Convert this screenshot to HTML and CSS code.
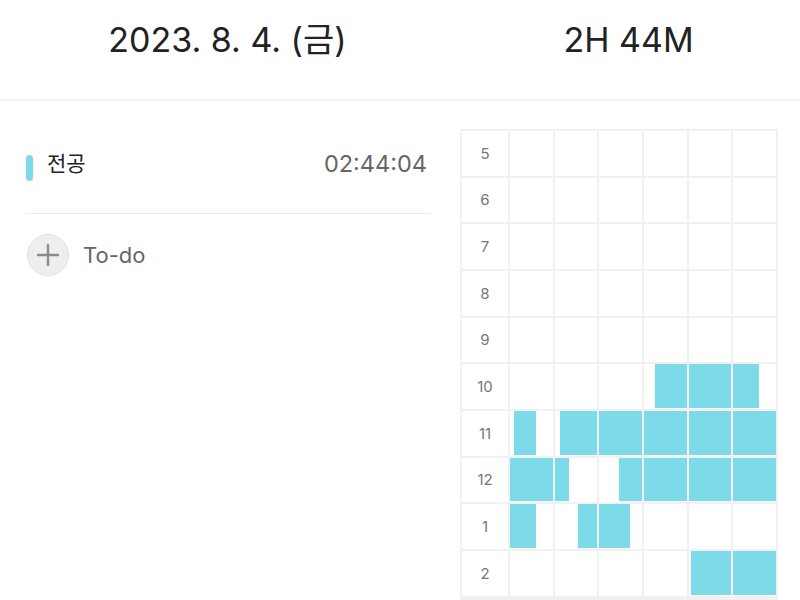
FILE: index.html
```html
<!DOCTYPE html>
<html lang="ko">
<head>
    <meta charset="UTF-8">
    <meta name="viewport" content="width=device-width, initial-scale=1.0">
    <title>타임테이블</title>
    <link rel="stylesheet" href="styles.css">
</head>
<body>
    <header class="day-header">
        <div class="day-date">2023. 8. 4. (금)</div>
        <div class="day-total">2H 44M</div>
    </header>

    <main class="day-body">
        <section class="task-panel">
            <div class="task-row">
                <span class="task-color"></span>
                <span class="task-name">전공</span>
                <span class="task-time">02:44:04</span>
            </div>

            <div class="todo-row">
                <span class="todo-add">
                    <svg width="22" height="22" viewBox="0 0 22 22">
                        <path d="M11 1v20M1 11h20" stroke="#8c8c8c" stroke-width="2.4" stroke-linecap="round" fill="none"/>
                    </svg>
                </span>
                <span class="todo-label">To-do</span>
            </div>
        </section>

        <section class="timetable" id="timetable"></section>
    </main>

    <script>
        // 시간 라벨 (오전 5시부터 오후 2시까지)
        const hours = [5, 6, 7, 8, 9, 10, 11, 12, 1, 2];

        // 공부 기록: [행 인덱스, 칸(10분 단위), 시작 분, 끝 분]
        const records = [
            [5, 3, 2.5, 10], [5, 4, 0, 10], [5, 5, 0, 6],
            [6, 0, 1, 6], [6, 1, 1.2, 10], [6, 2, 0, 10], [6, 3, 0, 10], [6, 4, 0, 10], [6, 5, 0, 10],
            [7, 0, 0, 10], [7, 1, 0, 3.3], [7, 2, 4.5, 10], [7, 3, 0, 10], [7, 4, 0, 10], [7, 5, 0, 10],
            [8, 0, 0, 6.2], [8, 1, 5.4, 10], [8, 2, 0, 7.3],
            [9, 4, 0.5, 10], [9, 5, 0, 10]
        ];

        const table = document.getElementById('timetable');

        hours.forEach(function (hour, row) {
            const label = document.createElement('div');
            label.className = 'hour-label';
            label.textContent = hour;
            table.appendChild(label);

            for (let col = 0; col < 6; col++) {
                const cell = document.createElement('div');
                cell.className = 'slot';

                records
                    .filter(r => r[0] === row && r[1] === col)
                    .forEach(function (r) {
                        const block = document.createElement('div');
                        block.className = 'slot-fill';
                        block.style.left = (r[2] * 10) + '%';
                        block.style.width = ((r[3] - r[2]) * 10) + '%';
                        cell.appendChild(block);
                    });

                table.appendChild(cell);
            }
        });
    </script>
</body>
</html>
```

FILE: styles.css
```css
* {
    box-sizing: border-box;
    margin: 0;
    padding: 0;
}

html, body {
    overflow: hidden;
}

body {
    font-family: 'Inter', 'Noto Sans CJK KR', sans-serif;
    background: #fff;
    color: #222;
    width: 800px;
    height: 600px;
}

/* 상단 날짜 / 총 시간 */
.day-header {
    display: grid;
    grid-template-columns: 455px 1fr;
    height: 101px;
    padding-top: 20px;
    border-bottom: 2px solid #f3f3f3;
}

.day-date,
.day-total {
    text-align: center;
    font-size: 34px;
    line-height: 40px;
    color: #222;
}

.day-total {
    padding-left: 2px;
}

.day-body {
    display: flex;
    padding: 28px 0 0 26px;
}

/* 왼쪽 과목 목록 */
.task-panel {
    width: 405px;
    margin-right: 29px;
}

.task-row {
    display: flex;
    align-items: flex-start;
    height: 85px;
    padding-top: 22px;
    border-bottom: 1px solid #ececec;
}

.task-color {
    width: 7px;
    height: 26px;
    margin-top: 4px;
    border-radius: 4px;
    background: #7ddbe9;
}

.task-name {
    margin-left: 14px;
    font-size: 21px;
    line-height: 26px;
    color: #222;
}

.task-time {
    margin-left: auto;
    padding-right: 4px;
    font-size: 23.5px;
    line-height: 26px;
    color: #666;
}

.todo-row {
    display: flex;
    align-items: center;
    gap: 14px;
    padding-top: 20px;
    padding-left: 1px;
}

.todo-add {
    display: flex;
    align-items: center;
    justify-content: center;
    width: 42px;
    height: 42px;
    border-radius: 50%;
    background: #eeeeee;
    border: 1px solid #e3e3e3;
}

.todo-label {
    font-size: 22px;
    color: #666;
}

/* 오른쪽 타임테이블 */
.timetable {
    display: grid;
    grid-template-columns: 46px repeat(6, 1fr);
    grid-auto-rows: 44.67px;
    gap: 2px;
    padding: 2px 2px 4px;
    width: 318px;
    align-self: flex-start;
    background: #f1f1f1;
}

.hour-label {
    display: flex;
    align-items: center;
    justify-content: center;
    background: #fff;
    font-size: 15px;
    color: #777;
}

.slot {
    position: relative;
    background: #fff;
}

.slot-fill {
    position: absolute;
    top: 0;
    bottom: 1px;
    background: #7ddbe9;
}
```
